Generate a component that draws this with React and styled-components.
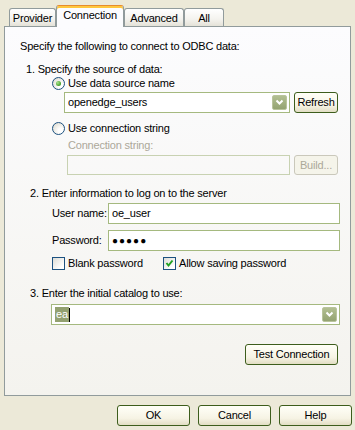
import React from 'react';
import styled, { createGlobalStyle, css } from 'styled-components';

const GlobalStyle = createGlobalStyle`
  html, body {
    margin: 0;
    padding: 0;
    background: #ece9d8;
  }
  body {
    font-family: 'Liberation Sans', Arial, sans-serif;
    font-size: 11px;
    letter-spacing: -0.2px;
    color: #000;
  }
`;

const Dialog = styled.div`
  width: 355px;
  height: 430px;
  box-sizing: border-box;
  padding: 5px 4px 0 4px;
  background: #ece9d8;
`;

const TabStrip = styled.div`
  display: flex;
  align-items: flex-end;
  height: 21px;
  padding-left: 5px;
`;

const Tab = styled.div`
  box-sizing: border-box;
  width: ${p => p.$w}px;
  height: 18px;
  border: 1px solid #919b9c;
  border-bottom: none;
  border-radius: 3px 3px 0 0;
  background: linear-gradient(#ffffff, #f4f3ee 60%, #e4e2d8);
  display: flex;
  align-items: center;
  justify-content: center;
  line-height: 13px;
  padding-top: 1px;
  white-space: nowrap;

  ${p => p.$active && css`
    height: 22px;
    margin-bottom: -1px;
    position: relative;
    z-index: 1;
    background: #fcfcfe;
    border-top: 1px solid #e68b2c;
    box-shadow: inset 0 2px 0 #ffc73c;
    padding: 0 0 3px;
  `}
`;

const Panel = styled.div`
  box-sizing: border-box;
  height: 370px;
  border: 1px solid #919b9c;
  background: linear-gradient(#fcfcfe, #f4f3ee);
  padding-top: 13px;
  display: flex;
  flex-direction: column;
  align-items: flex-start;
`;

const Line = styled.div`
  height: 13px;
  line-height: 13px;
  white-space: nowrap;
  margin: ${p => p.$mt}px 0 0 ${p => p.$ml}px;
  color: ${p => (p.$disabled ? '#aca899' : '#000')};
`;

const Row = styled.div`
  display: flex;
  align-items: center;
  gap: ${p => p.$gap || 0}px;
  margin: ${p => p.$mt}px 0 0 ${p => p.$ml}px;
  align-self: ${p => (p.$end ? 'flex-end' : 'auto')};
  margin-right: ${p => (p.$end ? '12px' : '0')};
`;

const Option = styled.div`
  display: flex;
  align-items: center;
  gap: 3px;
  height: 13px;
  line-height: 13px;
  white-space: nowrap;
  flex-shrink: 0;
  width: ${p => (p.$w ? `${p.$w}px` : 'auto')};
`;

const Radio = styled.span`
  box-sizing: border-box;
  width: 13px;
  height: 13px;
  border-radius: 50%;
  border: 1px solid #1c5180;
  background: radial-gradient(circle at 70% 70%, #ffffff 20%, #d8d5c8);
  display: flex;
  align-items: center;
  justify-content: center;

  &::after {
    content: '';
    display: ${p => (p.$on ? 'block' : 'none')};
    width: 5px;
    height: 5px;
    border-radius: 50%;
    background: radial-gradient(circle at 35% 35%, #a9e391, #3c9a1f 75%);
  }
`;

const CheckBox = styled.span`
  box-sizing: border-box;
  width: 13px;
  height: 13px;
  border: 1px solid #1c5180;
  background: linear-gradient(135deg, #dcdcd6, #ffffff 80%);
  display: flex;
  align-items: center;
  justify-content: center;
`;

const Field = styled.div`
  box-sizing: border-box;
  flex-shrink: 0;
  width: ${p => p.$w}px;
  height: ${p => p.$h || 21}px;
  border: 1px solid ${p => (p.$disabled ? '#c8d2b2' : '#a5b97f')};
  background: ${p => (p.$disabled ? 'transparent' : '#ffffff')};
  display: flex;
  align-items: center;
  padding: 0 2px 0 3px;
  line-height: 13px;
  white-space: nowrap;
`;

const DropButton = styled.span`
  box-sizing: border-box;
  width: 15px;
  height: 15px;
  margin-left: auto;
  border: 1px solid #b9c49c;
  border-radius: 2px;
  background: linear-gradient(#b2bf92, #94a371);
  display: flex;
  align-items: center;
  justify-content: center;
`;

const Selected = styled.span`
  background: #93a170;
  color: #ffffff;
  line-height: 15px;
  padding: 0 1px;
`;

const Caret = styled.span`
  width: 1px;
  height: 14px;
  background: #000;
`;

const Dots = styled.span`
  font-size: 10px;
  letter-spacing: 1px;
`;

const Label = styled.span`
  width: ${p => p.$w}px;
  flex-shrink: 0;
  line-height: 13px;
  white-space: nowrap;
`;

const Button = styled.button`
  box-sizing: border-box;
  flex-shrink: 0;
  width: ${p => p.$w}px;
  height: ${p => p.$h || 21}px;
  padding: 0;
  font: inherit;
  letter-spacing: inherit;
  line-height: 13px;
  white-space: nowrap;
  color: ${p => (p.$disabled ? '#aca899' : '#000')};
  border: 1px solid ${p => (p.$disabled ? '#cac8bb' : '#3d5d1c')};
  border-radius: 3px;
  background: ${p => (p.$disabled
    ? '#f5f4ea'
    : 'linear-gradient(#fffff8, #f6f3e4 65%, #e2dec4)')};
`;

const Footer = styled.div`
  display: flex;
  justify-content: flex-end;
  gap: 8px;
  padding-top: 9px;
  margin-right: -1px;
`;

const Chevron = () => (
  <svg width="9" height="7" viewBox="0 0 9 7">
    <polyline points="1.5,1.5 4.5,4.5 7.5,1.5" fill="none" stroke="#fff" strokeWidth="2" />
  </svg>
);

const Check = () => (
  <svg width="9" height="9" viewBox="0 0 9 9">
    <polyline points="1.5,4 3.5,6.5 7.5,1.5" fill="none" stroke="#21a121" strokeWidth="2" />
  </svg>
);

const App = () => {
  return (
    <>
      <GlobalStyle />
      <Dialog>
        <TabStrip>
          <Tab $w={47}>Provider</Tab>
          <Tab $w={68} $active>Connection</Tab>
          <Tab $w={60}>Advanced</Tab>
          <Tab $w={40}>All</Tab>
        </TabStrip>
        <Panel>
          <Line $mt={0} $ml={15}>Specify the following to connect to ODBC data:</Line>
          <Line $mt={10} $ml={21}>1. Specify the source of data:</Line>
          <Row $mt={1} $ml={47}>
            <Option><Radio $on />Use data source name</Option>
          </Row>
          <Row $mt={2} $ml={59} $gap={4}>
            <Field $w={226}>
              openedge_users
              <DropButton><Chevron /></DropButton>
            </Field>
            <Button $w={44}>Refresh</Button>
          </Row>
          <Row $mt={9} $ml={47}>
            <Option><Radio />Use connection string</Option>
          </Row>
          <Line $mt={4} $ml={63} $disabled>Connection string:</Line>
          <Row $mt={3} $ml={62} $gap={4}>
            <Field $w={223} $h={20} $disabled />
            <Button $w={44} $h={20} $disabled>Build...</Button>
          </Row>
          <Line $mt={12} $ml={25}>2. Enter information to log on to the server</Line>
          <Row $mt={3} $ml={47}>
            <Label $w={56}>User name:</Label>
            <Field $w={232}>oe_user</Field>
          </Row>
          <Row $mt={6} $ml={47}>
            <Label $w={56}>Password:</Label>
            <Field $w={232}><Dots>●●●●●</Dots></Field>
          </Row>
          <Row $mt={6} $ml={47}>
            <Option $w={111}><CheckBox />Blank password</Option>
            <Option><CheckBox><Check /></CheckBox>Allow saving password</Option>
          </Row>
          <Line $mt={17} $ml={25}>3. Enter the initial catalog to use:</Line>
          <Row $mt={4} $ml={46}>
            <Field $w={289}>
              <Selected>ea</Selected>
              <Caret />
              <DropButton><Chevron /></DropButton>
            </Field>
          </Row>
          <Row $mt={19} $ml={0} $end>
            <Button $w={93}>Test Connection</Button>
          </Row>
        </Panel>
        <Footer>
          <Button $w={73}>OK</Button>
          <Button $w={73}>Cancel</Button>
          <Button $w={73}>Help</Button>
        </Footer>
      </Dialog>
    </>
  );
};

export default App;
